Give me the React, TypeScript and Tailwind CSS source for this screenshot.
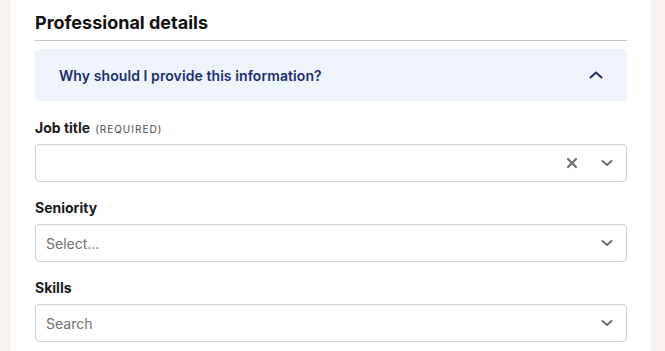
import React from "react";

const ChevronDown = () => (
  <svg width="14" height="14" viewBox="0 0 14 14" fill="none">
    <path d="M2.5 5 L7 9 L11.5 5" stroke="#6e6e6e" strokeWidth="2" strokeLinecap="round" strokeLinejoin="round" />
  </svg>
);

const ChevronUp = () => (
  <svg width="14" height="14" viewBox="0 0 14 14" fill="none">
    <path d="M1.5 9.5 L7 4.5 L12.5 9.5" stroke="#1b2f6e" strokeWidth="2" strokeLinecap="round" strokeLinejoin="round" />
  </svg>
);

const XIcon = () => (
  <svg width="12" height="12" viewBox="0 0 12 12" fill="none">
    <path d="M2 2 L10 10 M10 2 L2 10" stroke="#6e6e6e" strokeWidth="2.2" strokeLinecap="round" />
  </svg>
);

function Field({
  label,
  required,
  placeholder,
  clear,
}: {
  label: string;
  required?: boolean;
  placeholder?: string;
  clear?: boolean;
}) {
  return (
    <div className="flex flex-col gap-[6px]">
      <div className="flex items-baseline gap-[5px] h-5 leading-5">
        <span className="text-[14px] font-bold text-[#1a1a1a]">{label}</span>
        {required && (
          <span className="text-[10px] tracking-[0.1em] text-[#4a4a4a]">(REQUIRED)</span>
        )}
      </div>
      <div className="h-[38px] border border-[#cfcfcf] rounded-[4px] flex items-center pl-[10px] pr-[12px]">
        <span className="flex-1 text-[14px] text-[#707070]">{placeholder}</span>
        {clear && (
          <span className="mr-[22px] flex items-center">
            <XIcon />
          </span>
        )}
        <ChevronDown />
      </div>
    </div>
  );
}

export default function App() {
  return (
    <div
      className="w-[665px] h-[351px] bg-[#f5f2ef] flex overflow-hidden"
      style={{ fontFamily: "Inter, 'Noto Sans', sans-serif" }}
    >
      <div className="ml-[11px] w-[640px] bg-white px-[24px] pt-[9px] flex flex-col">
        <h2 className="text-[18px] leading-[28px] font-bold text-[#111]">Professional details</h2>
        <div className="mt-[3px] h-px bg-[#c4c4c4]" />
        <div className="mt-[8px] h-[52px] bg-[#eff4fc] rounded-[4px] flex items-center justify-between pl-[24px] pr-[24px]">
          <span className="text-[14px] font-semibold tracking-[0.08px] text-[#1b2f6e]">
            Why should I provide this information?
          </span>
          <ChevronUp />
        </div>
        <div className="mt-[17px] flex flex-col gap-[16px]">
          <Field label="Job title" required clear />
          <Field label="Seniority" placeholder="Select..." />
          <Field label="Skills" placeholder="Search" />
        </div>
      </div>
    </div>
  );
}
